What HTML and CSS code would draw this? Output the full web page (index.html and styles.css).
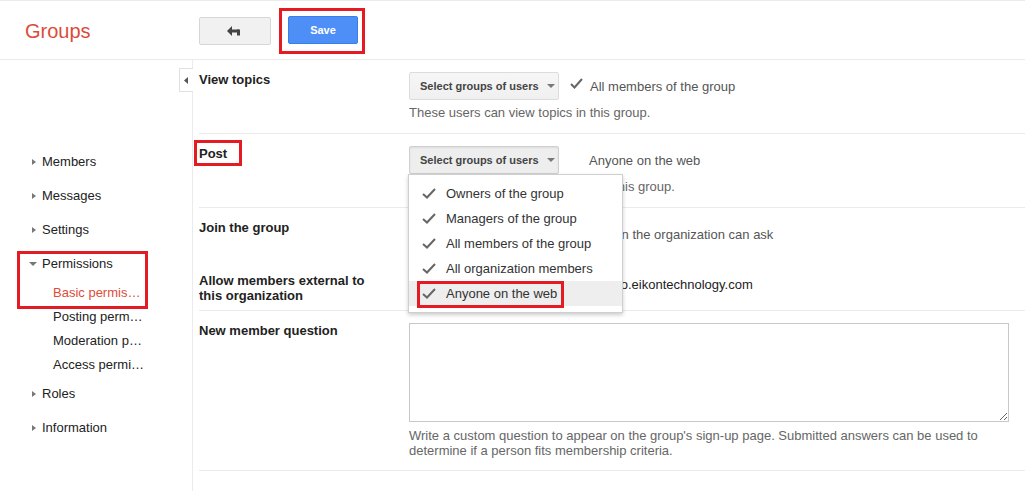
FILE: index.html
```html
<!DOCTYPE html>
<html>
<head>
<meta charset="utf-8">
<link rel="stylesheet" href="styles.css">
</head>
<body>
<header class="header">
  <div class="brand">Groups</div>
  <div class="actions">
    <button class="btn back" aria-label="Back">
      <svg width="16" height="10" viewBox="0 0 16 10"><path d="M5 0 L0 5 L5 10 Z" fill="#444"/><rect x="4" y="3.5" width="8" height="3" fill="#444"/><rect x="10" y="3.5" width="3" height="6" fill="#444"/></svg>
    </button>
    <span class="mark save-mark"><button class="btn save">Save</button></span>
  </div>
</header>
<div class="layout">
  <aside class="sidebar">
    <span class="collapse"><svg width="5" height="7" viewBox="0 0 5 7"><path d="M4 0 L0 3.5 L4 7 Z" fill="#555"/></svg></span>
    <nav class="nav">
      <div class="nav-item"><span class="tri right"></span>Members</div>
      <div class="nav-item"><span class="tri right"></span>Messages</div>
      <div class="nav-item"><span class="tri right"></span>Settings</div>
      <div class="group">
        <div class="nav-item"><span class="tri down"></span>Permissions</div>
        <div class="sub active">Basic permis…</div>
        <span class="mark perm-mark"></span>
      </div>
      <div class="sub">Posting perm…</div>
      <div class="sub">Moderation p…</div>
      <div class="sub">Access permi…</div>
      <div class="nav-item"><span class="tri right"></span>Roles</div>
      <div class="nav-item"><span class="tri right"></span>Information</div>
    </nav>
  </aside>
  <main class="main">
    <section class="row">
      <div class="label">View topics</div>
      <div class="control">
        <div class="line">
          <span class="select">Select groups of users<span class="caret"></span></span>
          <span class="chosen"><svg class="check" width="13" height="11" viewBox="0 0 13 11"><path d="M1 6 L4.5 9.5 L12 1" fill="none" stroke="#666" stroke-width="2"/></svg>All members of the group</span>
        </div>
        <div class="desc">These users can view topics in this group.</div>
      </div>
    </section>
    <section class="row">
      <div class="label"><span class="post-label">Post<span class="mark post-mark"></span></span></div>
      <div class="control">
        <div class="line">
          <span class="select pressed">Select groups of users<span class="caret"></span></span>
          <span class="chosen plain">Anyone on the web</span>
        </div>
        <div class="desc">These users can post messages to this group.</div>
        <div class="menu">
          <div class="menu-item"><svg class="mcheck" width="14" height="11" viewBox="0 0 14 11"><path d="M1 6 L5 9.5 L13 1" fill="none" stroke="#666" stroke-width="2"/></svg>Owners of the group</div>
          <div class="menu-item"><svg class="mcheck" width="14" height="11" viewBox="0 0 14 11"><path d="M1 6 L5 9.5 L13 1" fill="none" stroke="#666" stroke-width="2"/></svg>Managers of the group</div>
          <div class="menu-item"><svg class="mcheck" width="14" height="11" viewBox="0 0 14 11"><path d="M1 6 L5 9.5 L13 1" fill="none" stroke="#666" stroke-width="2"/></svg>All members of the group</div>
          <div class="menu-item"><svg class="mcheck" width="14" height="11" viewBox="0 0 14 11"><path d="M1 6 L5 9.5 L13 1" fill="none" stroke="#666" stroke-width="2"/></svg>All organization members</div>
          <div class="menu-item hover"><svg class="mcheck" width="14" height="11" viewBox="0 0 14 11"><path d="M1 6 L5 9.5 L13 1" fill="none" stroke="#666" stroke-width="2"/></svg>Anyone on the web<span class="mark web-mark"></span></div>
        </div>
      </div>
    </section>
    <section class="row multi">
      <div class="label">Join the group</div>
      <div class="control">
        <div class="line">
          <span class="select">Select groups of users<span class="caret"></span></span>
          <span class="chosen ask">Anyone in the organization can ask</span>
        </div>
      </div>
      <div class="label two">Allow members external to this organization</div>
      <div class="control">
        <div class="ext">Allow members outside of demo.eikontechnology.com</div>
      </div>
    </section>
    <section class="row">
      <div class="label">New member question</div>
      <div class="control">
        <textarea class="question"></textarea>
        <div class="desc wide">Write a custom question to appear on the group's sign-up page. Submitted answers can be used to determine if a person fits membership criteria.</div>
      </div>
    </section>
  </main>
</div>
</body>
</html>
```
FILE: styles.css
```css
* { box-sizing: border-box; }
html, body { margin: 0; padding: 0; }
body {
  font-family: "Liberation Sans", Arial, sans-serif;
  font-size: 13px;
  color: #222;
  background: #fff;
  width: 1025px;
  height: 491px;
  overflow: hidden;
}
.header {
  height: 60px;
  border-top: 1px solid #ebebeb;
  border-bottom: 1px solid #ebebeb;
  display: flex;
  align-items: center;
}
.brand {
  width: 199px;
  padding-left: 25px;
  font-size: 20px;
  color: #dd4b39;
  padding-top: 2px;
}
.actions {
  display: flex;
  align-items: center;
  gap: 8px;
  padding-top: 2px;
}
.btn {
  height: 28px;
  border-radius: 2px;
  font-family: "Liberation Sans", Arial, sans-serif;
  font-size: 11px;
  font-weight: bold;
  cursor: pointer;
}
.back {
  width: 72px;
  background: #f1f1f1;
  border: 1px solid #d6d6d6;
  display: flex;
  align-items: center;
  justify-content: center;
  padding: 0;
}
.save {
  width: 70px;
  background: #4d8ff7;
  border: 1px solid #3a7ee8;
  color: #fff;
}
.mark { border: 3px solid #e51b24; }
.save-mark {
  display: inline-block;
  padding: 5px 4px 7px 6px;
  line-height: 0;
}
.layout { display: flex; height: 431px; }
.sidebar {
  width: 193px;
  border-right: 1px solid #ebebeb;
  position: relative;
  flex: none;
}
.collapse {
  position: absolute;
  right: -1px;
  top: 8px;
  width: 14px;
  height: 24px;
  border: 1px solid #e0e0e0;
  border-right: none;
  background: #fff;
  display: flex;
  align-items: center;
  justify-content: center;
}
.nav { padding-top: 85px; }
.nav-item {
  height: 34px;
  line-height: 34px;
  padding-left: 42px;
  position: relative;
}
.tri {
  position: absolute;
  width: 0; height: 0;
}
.tri.right {
  left: 32px; top: 14px;
  border-top: 3.5px solid transparent;
  border-bottom: 3.5px solid transparent;
  border-left: 4px solid #777;
}
.tri.down {
  left: 29px; top: 15px;
  border-left: 4px solid transparent;
  border-right: 4px solid transparent;
  border-top: 4px solid #777;
}
.group { position: relative; }
.perm-mark {
  position: absolute;
  left: 17px; top: 4px;
  width: 131px; height: 58px;
}
.sub {
  height: 24px;
  line-height: 24px;
  padding-left: 53px;
}
.sub.active { color: #dd4b39; }
.main { flex: 1; padding-left: 6px; }
.row {
  display: grid;
  grid-template-columns: 210px 1fr;
  border-bottom: 1px solid #ebebeb;
  padding: 12px 0;
}
.row.multi { padding-bottom: 7px; }
.label {
  font-weight: bold;
  line-height: 15px;
  padding-right: 20px;
}
.label.two { margin-top: 25px; }
.post-label { position: relative; display: inline-block; }
.post-mark {
  position: absolute;
  left: -5px; top: -6px;
  width: 48px; height: 26px;
}
.control { position: relative; }
.line {
  display: flex;
  align-items: center;
  height: 28px;
}
.select {
  display: inline-flex;
  align-items: center;
  height: 28px;
  width: 150px;
  padding-left: 10px;
  background: linear-gradient(#f6f6f6, #f0f0f0);
  border: 1px solid #dcdcdc;
  border-radius: 2px;
  color: #444;
  font-size: 11px;
  font-weight: bold;
}
.select.pressed { background: #eeeeee; border-color: #d0d0d0; box-shadow: inset 0 1px 2px rgba(0,0,0,0.08); }
.caret {
  margin-left: 8px;
  width: 0; height: 0;
  border-left: 4px solid transparent;
  border-right: 4px solid transparent;
  border-top: 4px solid #777;
}
.chosen {
  display: inline-flex;
  align-items: center;
  margin-left: 11px;
  color: #555;
}
.chosen.plain { margin-left: 30px; }
.chosen.ask { margin-left: 12px; }
.check { margin-right: 7px; margin-top: -6px; }
.desc {
  margin-top: 5px;
  line-height: 16px;
  color: #666;
}
.desc.wide { margin-top: 6px; line-height: 15px; width: 600px; }
.ext {
  margin-top: 29px;
  padding-left: 34px;
  line-height: 15px;
}
.question {
  display: block;
  width: 600px;
  height: 99px;
  border: 1px solid #c8c8c8;
  resize: vertical;
  margin: 0;
}
.menu {
  position: absolute;
  left: -1px; top: 28px;
  width: 215px;
  background: #fff;
  border: 1px solid #cfcfcf;
  box-shadow: 0 2px 4px rgba(0,0,0,0.2);
  padding: 6px 0 6px;
  z-index: 5;
}
.menu-item {
  position: relative;
  height: 25px;
  line-height: 25px;
  padding-left: 37px;
  color: #333;
}
.menu-item.hover { background: #eeeeee; }
.mcheck { position: absolute; left: 13px; top: 7px; }
.web-mark {
  position: absolute;
  left: 8px; top: 0;
  width: 147px; height: 27px;
}
```
